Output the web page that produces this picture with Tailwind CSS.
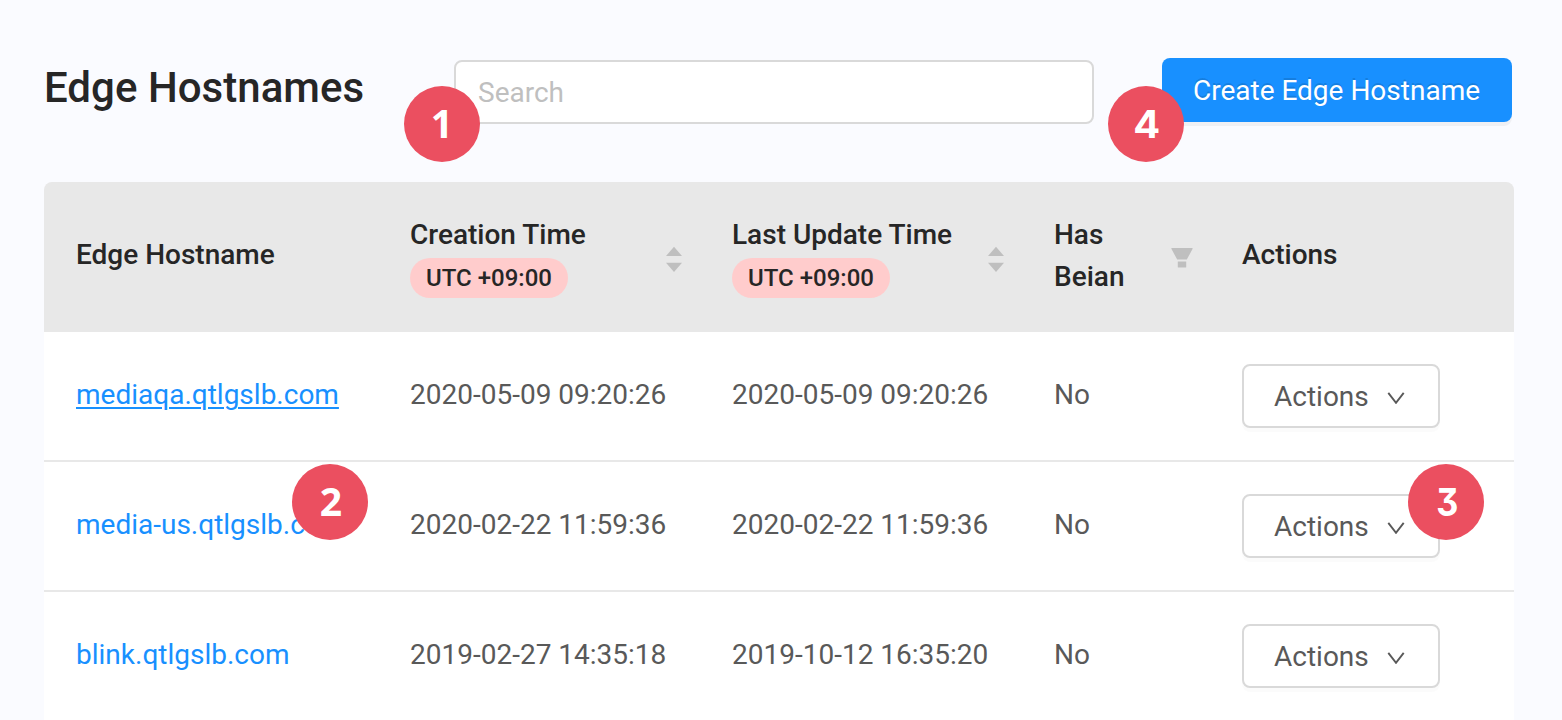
<!DOCTYPE html>
<html lang="en">
<head>
<meta charset="utf-8">
<title>Edge Hostnames</title>
<script src="https://cdn.jsdelivr.net/npm/@tailwindcss/browser@4"></script>
</head>
<body class="relative h-[720px] w-[1562px] overflow-hidden bg-[#fafbff] font-['Roboto',sans-serif] text-[28px] leading-[42px] text-[#595959]">
<header class="flex h-[182px] items-start pl-11 pt-[58px]">
  <h1 class="w-[410px] pt-[2px] text-[42px] font-medium leading-[56px] tracking-[0.03px] text-[#262626]">Edge Hostnames</h1>
  <input type="text" placeholder="Search" class="mt-[2px] h-16 w-[640px] rounded-lg border-2 border-[#d9d9d9] bg-white px-[22px] leading-[42px] placeholder:text-[#bfbfbf]">
  <button class="ml-[68px] h-16 w-[350px] rounded-lg bg-[#1890ff] pr-px pt-[2px] text-white shadow-[0_4px_0_rgba(0,0,0,0.045)] [text-shadow:0_-2px_0_rgba(0,0,0,0.12)]">Create Edge Hostname</button>
</header>
<main class="ml-11 w-[1470px]">
  <div class="grid h-[150px] grid-cols-[334px_322px_322px_188px_304px] rounded-t-lg bg-[#e8e8e8] font-medium text-[#262626]">
    <div class="flex items-center pl-8 pb-[5px]">Edge Hostname</div>
    <div class="flex items-center justify-between pl-8 pr-[18px]">
      <div class="pb-[2px]"><div>Creation Time</div><div class="mt-[2px] flex h-10 w-[158px] items-center justify-center rounded-full bg-[#ffcccc] text-2xl">UTC +09:00</div></div>
      <svg class="mt-1 h-[26px] w-4" viewBox="0 0 16 26" fill="#bfbfbf"><path d="M0 10L8 .8L16 10ZM0 16.7H16L8 26Z"/></svg>
    </div>
    <div class="flex items-center justify-between pl-8 pr-[18px]">
      <div class="pb-[2px]"><div>Last Update Time</div><div class="mt-[2px] flex h-10 w-[158px] items-center justify-center rounded-full bg-[#ffcccc] text-2xl">UTC +09:00</div></div>
      <svg class="mt-1 h-[26px] w-4" viewBox="0 0 16 26" fill="#bfbfbf"><path d="M0 10L8 .8L16 10ZM0 16.7H16L8 26Z"/></svg>
    </div>
    <div class="flex items-center justify-between pl-8 pr-[17px]">
      <div class="w-20 pb-[2px]">Has Beian</div>
      <svg class="mt-[2px] h-5 w-[22px]" viewBox="0 0 22 20" fill="#bfbfbf"><path d="M.8 0H21.2Q22 .2 21.5 1L15.8 11.6H6.2L.5 1Q0 .2.8 0ZM6.8 13.6H15.2V19Q15.2 19.6 14.6 19.6H7.4Q6.8 19.6 6.8 19Z"/></svg>
    </div>
    <div class="flex items-center pl-8 pb-[5px]">Actions</div>
  </div>

  <div class="grid h-[130px] grid-cols-[334px_322px_322px_188px_304px] items-center border-b-2 border-[#e8e8e8] bg-white *:pl-8">
    <div class="-mt-[2px]"><a href="#" class="text-[#1890ff] underline decoration-2 underline-offset-[3px]">mediaqa.qtlgslb.com</a></div>
    <div class="-mt-[2px]">2020-05-09 09:20:26</div>
    <div class="-mt-[2px]">2020-05-09 09:20:26</div>
    <div class="-mt-[2px]">No</div>
    <div><button class="flex h-16 w-[198px] items-center rounded-lg border-2 border-[#d9d9d9] bg-white pl-[30px] pt-[2px] shadow-[0_4px_0_rgba(0,0,0,0.016)]">Actions<svg class="ml-[18px] mt-[2px] h-3 w-[18px]" viewBox="0 0 18 12" fill="none" stroke="#595959" stroke-width="1.9"><path d="M1.3.8L9 10.8L16.7.8"/></svg></button></div>
  </div>
  <div class="grid h-[130px] grid-cols-[334px_322px_322px_188px_304px] items-center border-b-2 border-[#e8e8e8] bg-white *:pl-8">
    <div class="-mt-[2px]"><a href="#" class="text-[#1890ff]">media-us.qtlgslb.com</a></div>
    <div class="-mt-[2px]">2020-02-22 11:59:36</div>
    <div class="-mt-[2px]">2020-02-22 11:59:36</div>
    <div class="-mt-[2px]">No</div>
    <div><button class="flex h-16 w-[198px] items-center rounded-lg border-2 border-[#d9d9d9] bg-white pl-[30px] pt-[2px] shadow-[0_4px_0_rgba(0,0,0,0.016)]">Actions<svg class="ml-[18px] mt-[2px] h-3 w-[18px]" viewBox="0 0 18 12" fill="none" stroke="#595959" stroke-width="1.9"><path d="M1.3.8L9 10.8L16.7.8"/></svg></button></div>
  </div>
  <div class="grid h-[130px] grid-cols-[334px_322px_322px_188px_304px] items-center border-b-2 border-[#e8e8e8] bg-white *:pl-8">
    <div class="-mt-[2px]"><a href="#" class="text-[#1890ff]">blink.qtlgslb.com</a></div>
    <div class="-mt-[2px]">2019-02-27 14:35:18</div>
    <div class="-mt-[2px]">2019-10-12 16:35:20</div>
    <div class="-mt-[2px]">No</div>
    <div><button class="flex h-16 w-[198px] items-center rounded-lg border-2 border-[#d9d9d9] bg-white pl-[30px] pt-[2px] shadow-[0_4px_0_rgba(0,0,0,0.016)]">Actions<svg class="ml-[18px] mt-[2px] h-3 w-[18px]" viewBox="0 0 18 12" fill="none" stroke="#595959" stroke-width="1.9"><path d="M1.3.8L9 10.8L16.7.8"/></svg></button></div>
  </div>
</main>

<!-- Numbered callouts -->
<div class="absolute left-[404px] top-[86px] flex size-[76px] items-center justify-center rounded-full bg-[#eb4f60] pb-[2px] font-['Open_Sans',sans-serif] text-[39px] font-bold text-white">1</div>
<div class="absolute left-[292px] top-[464px] flex size-[76px] items-center justify-center rounded-full bg-[#eb4f60] pb-[2px] pl-[2px] font-['Open_Sans',sans-serif] text-[39px] font-bold text-white">2</div>
<div class="absolute left-[1408px] top-[464px] flex size-[76px] items-center justify-center rounded-full bg-[#eb4f60] font-['Inter',sans-serif] text-[38px] font-bold text-white [font-feature-settings:'cv09']"><span class="ml-[2px] inline-block scale-x-90">3</span></div>
<div class="absolute left-[1108px] top-[86px] flex size-[76px] items-center justify-center rounded-full bg-[#eb4f60] pl-[2px] font-['Inter',sans-serif] text-[38px] font-bold text-white"><span class="inline-block scale-x-105">4</span></div>
</body>
</html>
